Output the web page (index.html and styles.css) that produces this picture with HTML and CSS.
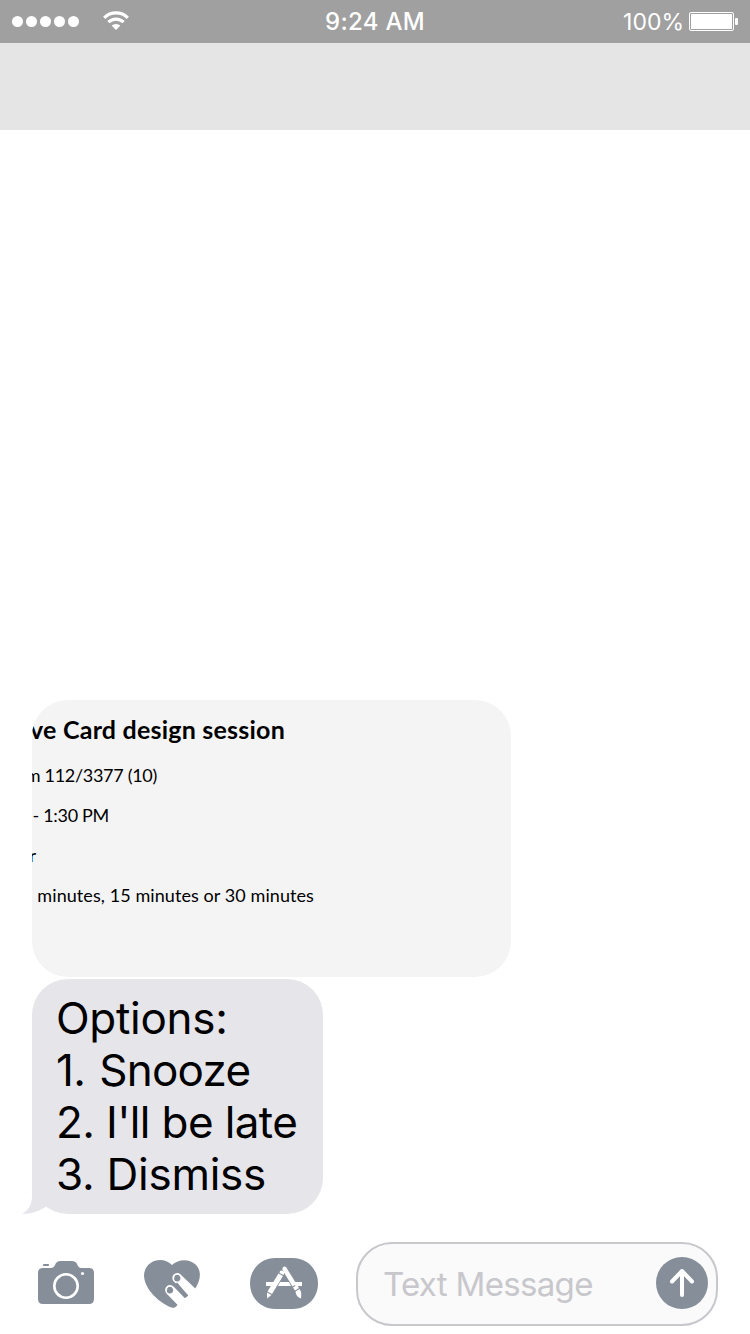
FILE: index.html
```html
<!DOCTYPE html>
<html lang="en">
<head>
<meta charset="utf-8">
<title>Messages</title>
<link rel="stylesheet" href="styles.css">
</head>
<body>
<div class="phone">
  <header class="status">
    <div class="signal">
      <span class="dot"></span><span class="dot"></span><span class="dot"></span><span class="dot"></span><span class="dot"></span>
      <svg class="wifi" width="28" height="20" viewBox="0 0 28 20" fill="none" stroke="#fff" stroke-width="3.200">
        <path d="M2.200 6.800A16.600 16.600 0 0 1 25.800 6.800"/>
        <path d="M6.400 11.200A10.800 10.800 0 0 1 21.600 11.200"/>
        <path d="M14 19L9.600 14.600A6.500 6.500 0 0 1 18.400 14.600Z" fill="#fff" stroke="none"/>
      </svg>
    </div>
    <div class="clock">9:24 AM</div>
    <div class="power">
      <span class="percent">100%</span>
      <svg width="49" height="20" viewBox="0 0 49 20">
        <rect x=".5" y=".5" width="44" height="18" rx="1.5" fill="none" stroke="#fff"/>
        <rect x="2" y="2" width="41" height="15" fill="#fff"/>
        <rect x="46" y="6" width="3" height="7" rx="1" fill="#fff"/>
      </svg>
    </div>
  </header>
  <div class="navbar"></div>
  <main class="thread">
    <section class="card">
      <div class="line title">ve Card design session</div>
      <div class="line room">m 112/3377 (10)</div>
      <div class="line time">- 1:30 PM</div>
      <div class="line who">r</div>
      <div class="line snooze">5 minutes, 15 minutes or 30 minutes</div>
    </section>
    <section class="bubble">
      <div class="option head">Options:</div>
      <div class="option one">1. Snooze</div>
      <div class="option two">2. I'll be late</div>
      <div class="option three">3. Dismiss</div>
      <svg class="tail" width="32" height="34" viewBox="0 0 32 34"><path d="M11 0V16C11 25 7 31 1 33.500C10 34.500 18 31 25.500 26.500L32 0Z" fill="#e5e5ea"/></svg>
    </section>
  </main>
  <footer class="composer">
    <svg class="camera" width="56" height="44" viewBox="0 0 56 44">
      <path d="M5 8H13C15 8 16 7 17 5L18 3Q19.500 1 22 1H34Q37 1 38.500 3L40 6Q41 8 43 8H51Q56 8 56 13V39Q56 44 51 44H5Q0 44 0 39V13Q0 8 5 8Z" fill="#868e99"/>
      <rect x="5" y="4" width="6" height="2" rx=".7" fill="#868e99"/>
      <circle cx="28" cy="26" r="11.700" fill="none" stroke="#fff" stroke-width="2.600"/>
      <circle cx="44.500" cy="13.500" r="1.600" fill="#fff"/>
    </svg>
    <svg class="heart" width="56" height="49" viewBox="0 0 56 49">
      <path d="M28 5C34-1 45-1.500 51 4C58 10 57 20 51 29L33.500 45C31 48 29 48.500 26 47C15 42 1 30 0 16C0 1 18-5 28 5Z" fill="#868e99"/>
      <path d="M33.200 18L53 37M26 30L43 47.500" fill="none" stroke="#fff" stroke-width="9.800" stroke-linecap="round"/>
      <path d="M32 23.500L43 36.500" fill="none" stroke="#868e99" stroke-width="3"/>
      <path d="M31.500 15.300Q34.500 13.500 36.300 17Q37 20.200 34.500 21.300Q30 22 30.200 18.500Q30.300 16.200 31.500 15.300Z" fill="#868e99"/>
      <path d="M24.200 27.300Q27.200 25.500 29 29Q29.700 32.200 27.200 33.300Q22.700 34 22.900 30.500Q23 28.200 24.200 27.300Z" fill="#868e99"/>
    </svg>
    <svg class="apps" width="68" height="51" viewBox="0 0 68 51">
      <path d="M25.500 0H42.500C57 0 68 11 68 25.500S57 51 42.500 51H25.500C11 51 0 40 0 25.500S11 0 25.500 0Z" fill="#868e99"/>
      <path d="M16 24H52V28H16Z" fill="#fff"/>
      <path d="M34.500 10L48 32L50.500 40L20 35L30 17Z" fill="#868e99"/>
      <path d="M30 24H39L41 28H28Z" fill="#fff"/>
      <g fill="#fff">
        <path d="M28.500 15.500L33 18L22 36L17.500 33.500Z"/>
        <path d="M30 13Q31.500 12 33.500 13.500Q35 14.500 33.500 17L29.500 15Z"/>
        <path d="M17 34.500L21.500 37L17 40.500Z"/>
        <path d="M32.500 10Q33.500 7.500 36 9L46.500 26L42.500 28.500L32.500 12Z"/>
        <path d="M43 29.500L47 27L49 30L45 32.500Z"/>
        <path d="M45.500 33.500L49.500 31Q52 34 51 40.500Q46 39 45.500 33.500Z"/>
      </g>
    </svg>
    <div class="field">
      <span class="placeholder">Text Message</span>
      <svg class="send" width="52" height="52" viewBox="0 0 52 52">
        <circle cx="26" cy="26" r="26" fill="#868e99"/>
        <path d="M26 38V14M16 24.500L26 14L36 24.500" fill="none" stroke="#fff" stroke-width="4" stroke-linecap="round" stroke-linejoin="round"/>
      </svg>
    </div>
  </footer>
</div>
</body>
</html>
```
FILE: styles.css
```css
body { margin: 0; background: #fff; font-family: Inter, "Liberation Sans", sans-serif; }
.phone { width: 750px; height: 1334px; display: flex; flex-direction: column; overflow: hidden; }
.status { box-sizing: border-box; flex: none; height: 43px; padding: 0 12px; background: #a0a0a0; color: #fff; display: grid; grid-template: 43px / 1fr auto 1fr; align-items: center; }
.signal { display: flex; align-items: center; gap: 3px; }
.dot { width: 11px; height: 11px; border-radius: 50%; background: #fff; }
.wifi { margin: 0 0 1px 20px; }
.clock { font-size: 24px; font-weight: 500; letter-spacing: .3px; line-height: 43px; }
.power { display: flex; justify-content: flex-end; align-items: center; gap: 5px; }
.power svg { margin-top: 1px; }
.percent { font-size: 23px; line-height: 41px; padding-top: 2px; }
.navbar { flex: none; height: 87px; background: #e5e5e5; }
.thread { flex: 1; display: flex; flex-direction: column; justify-content: flex-end; align-items: flex-start; gap: 2px; padding-left: 32px; }
.card { box-sizing: border-box; width: 479px; height: 277px; padding-top: 10px; background: #f4f4f4; border-radius: 36px; overflow: hidden; color: #000; font-family: Lato, sans-serif; }
.line { display: flex; justify-content: flex-end; white-space: pre; font-size: 18px; line-height: 40px; }
.title { width: 253px; font-size: 25px; letter-spacing: .22px; font-weight: 700; height: 45px; line-height: 39px; }
.room { width: 125px; letter-spacing: -.3px; }
.time { width: 77px; letter-spacing: -.3px; }
.who { width: 4px; }
.snooze { width: 282px; letter-spacing: .08px; }
.bubble { box-sizing: border-box; position: relative; width: 291px; height: 235px; padding: 13px 0 0 24px; border-radius: 36px; background: #e5e5ea; color: #000; }
.option { font-size: 44px; line-height: 52px; white-space: pre; }
.head { letter-spacing: -.3px; }
.one { letter-spacing: -.75px; word-spacing: 2.5px; }
.two { letter-spacing: -.62px; }
.three { letter-spacing: -.25px; }
.tail { position: absolute; left: -11px; bottom: 0; }
.composer { box-sizing: border-box; flex: none; height: 120px; padding: 28px 32px 8px 38px; display: flex; align-items: flex-start; }
.camera { margin-top: 18px; }
.heart { margin: 18px 0 0 50px; }
.apps { margin: 16px 0 0 50px; }
.field { box-sizing: border-box; width: 362px; height: 84px; margin-left: 38px; padding: 0 8px 0 25px; border: 2px solid #c7c7cc; border-radius: 36px; background: #fafafa; display: flex; align-items: center; justify-content: space-between; }
.placeholder { color: #c7c7cc; font-size: 33px; line-height: 40px; letter-spacing: -.68px; }
.send { margin-bottom: 2px; }
```
